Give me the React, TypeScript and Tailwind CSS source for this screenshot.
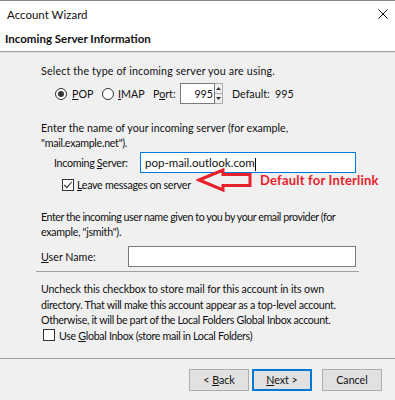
import React from "react";

function Radio({ checked }: { checked?: boolean }) {
  return (
    <span className="w-[12px] h-[12px] rounded-full border border-[#333] bg-white flex items-center justify-center shrink-0">
      {checked && <span className="w-[6px] h-[6px] rounded-full bg-[#333]" />}
    </span>
  );
}

function Check({ checked }: { checked?: boolean }) {
  return (
    <span className="w-[12px] h-[12px] border border-[#333] bg-white flex items-center justify-center shrink-0">
      {checked && (
        <svg width="10" height="10" viewBox="0 0 10 10">
          <path d="M1.2 5 L3.8 7.6 L8.8 2" fill="none" stroke="#333" strokeWidth="1.1" />
        </svg>
      )}
    </span>
  );
}

export default function App() {
  return (
    <div className="w-[395px] h-[400px] bg-[#f0f0f0] flex flex-col font-['Lato','Liberation_Sans',sans-serif] text-[10.7px] text-[#111] overflow-hidden leading-[15px] whitespace-nowrap [&>*]:shrink-0">
      <div className="bg-white border-t border-[#8a8a8a] h-[27px] flex items-center justify-between pl-[7px] pr-[7px]">
        <span className="text-[11.5px]">Account Wizard</span>
        <svg width="10" height="10" viewBox="0 0 10 10">
          <path d="M0.5 0.5 L9.5 9.5 M9.5 0.5 L0.5 9.5" stroke="#111" strokeWidth="1" />
        </svg>
      </div>
      <div className="bg-white h-[24px] flex items-center pl-[5px] font-bold text-[11.5px] pb-[2px]">
        Incoming Server Information
      </div>
      <div className="h-[1px] bg-[#a0a0a0]" />
      <div className="h-[1px] bg-[#dcdcdc]" />

      <div className="pl-[41px] pt-[10px] flex flex-col">
        <div className="tracking-[0.15px]">Select the type of incoming server you are using.</div>
        <div className="flex items-center mt-[5px] pl-[14px] h-[21px]">
          <Radio checked />
          <span className="ml-[5px] w-[30px]"><u>P</u>OP</span>
          <Radio />
          <span className="ml-[4px] w-[35px]"><u>I</u>MAP</span>
          <span className="w-[27px]">P<u>o</u>rt:</span>
          <div className="flex h-[21px]">
            <div className="w-[35px] h-[21px] border border-[#7a7a7a] bg-white text-right pr-[1px] leading-[19px]">995</div>
            <div className="w-[8px] h-[21px] flex flex-col border border-l-0 border-[#acacac] bg-[#f0f0f0]">
              <div className="flex-1 flex items-center justify-center border-b border-[#acacac]">
                <svg width="5" height="3" viewBox="0 0 5 3"><path d="M0 3 L2.5 0 L5 3Z" fill="#333" /></svg>
              </div>
              <div className="flex-1 flex items-center justify-center">
                <svg width="5" height="3" viewBox="0 0 5 3"><path d="M0 0 L2.5 3 L5 0Z" fill="#333" /></svg>
              </div>
            </div>
          </div>
          <span className="ml-[9px] w-[43px]">Default:</span>
          <span>995</span>
        </div>
      </div>

      <div className="pl-[41px] pt-[16px] flex flex-col">
        <div className="flex flex-col">
          <span>Enter the name of your incoming server (for example,</span>
          <span className="tracking-[-0.3px]">"mail.example.net").</span>
        </div>
        <div className="flex items-center mt-[2px] pl-[13px]">
          <span className="w-[86px] tracking-[-0.3px]">Incoming <u>S</u>erver:</span>
          <div className="w-[216px] h-[21px] border border-[#0078d7] bg-white pl-[4px] leading-[19px] text-[11.5px]">
            pop-mail.outlook.com<span className="inline-block w-[1px] h-[13px] bg-black align-middle" />
          </div>
        </div>
        <div className="flex items-center mt-[4px] pl-[21px] h-[15px] relative">
          <Check checked />
          <span className="ml-[3px] tracking-[-0.3px]"><u>L</u>eave messages on server</span>
          <div className="absolute left-[155px] top-[-9px] flex items-center">
            <svg width="58" height="24" viewBox="0 0 58 24">
              <path d="M3 12 L27 2 L27 6.5 L54 6.5 L54 17.5 L27 17.5 L27 22 Z" fill="none" stroke="#e8202a" strokeWidth="3" strokeLinejoin="miter" />
            </svg>
            <span className="ml-[6px] text-[#e8202a] font-bold text-[13px] tracking-[0.2px]">Default for Interlink</span>
          </div>
        </div>
      </div>

      <div className="pl-[41px] pt-[17px] flex flex-col">
        <div className="flex flex-col">
          <span className="tracking-[-0.45px]">Enter the incoming user name given to you by your email provider (for</span>
          <span className="tracking-[-0.3px]">example, "jsmith").</span>
        </div>
        <div className="flex items-center mt-[7px]">
          <span className="w-[87px]"><u>U</u>ser Name:</span>
          <div className="w-[228px] h-[21px] border border-[#7a7a7a] bg-white" />
        </div>
      </div>

      <div className="ml-[36px] w-[323px] mt-[4px] h-[1px] bg-[#a0a0a0]" />

      <div className="pl-[41px] pt-[9px] flex flex-col">
        <div className="flex flex-col leading-[15.5px]">
          <span className="tracking-[-0.15px]">Uncheck this checkbox to store mail for this account in its own</span>
          <span className="tracking-[-0.3px]">directory. That will make this account appear as a top-level account.</span>
          <span className="tracking-[-0.35px]">Otherwise, it will be part of the Local Folders Global Inbox account.</span>
        </div>
        <div className="flex items-center pl-[2px] h-[15px]">
          <Check />
          <span className="ml-[4px] tracking-[-0.33px]">Use <u>G</u>lobal Inbox (store mail in Local Folders)</span>
        </div>
      </div>

      <div className="mt-[15px] h-[1px] bg-[#a0a0a0]" />

      <div className="flex justify-end pr-[13px] pt-[10px]">
        <button className="w-[60px] h-[22px] border border-[#adadad] bg-[#e1e1e1]">&lt; <u>B</u>ack</button>
        <button className="ml-[3px] w-[60px] h-[22px] border-2 border-[#0078d7] bg-[#e1e1e1]"><u>N</u>ext &gt;</button>
        <button className="ml-[10px] w-[60px] h-[22px] border border-[#adadad] bg-[#e1e1e1]">Cancel</button>
      </div>
    </div>
  );
}
